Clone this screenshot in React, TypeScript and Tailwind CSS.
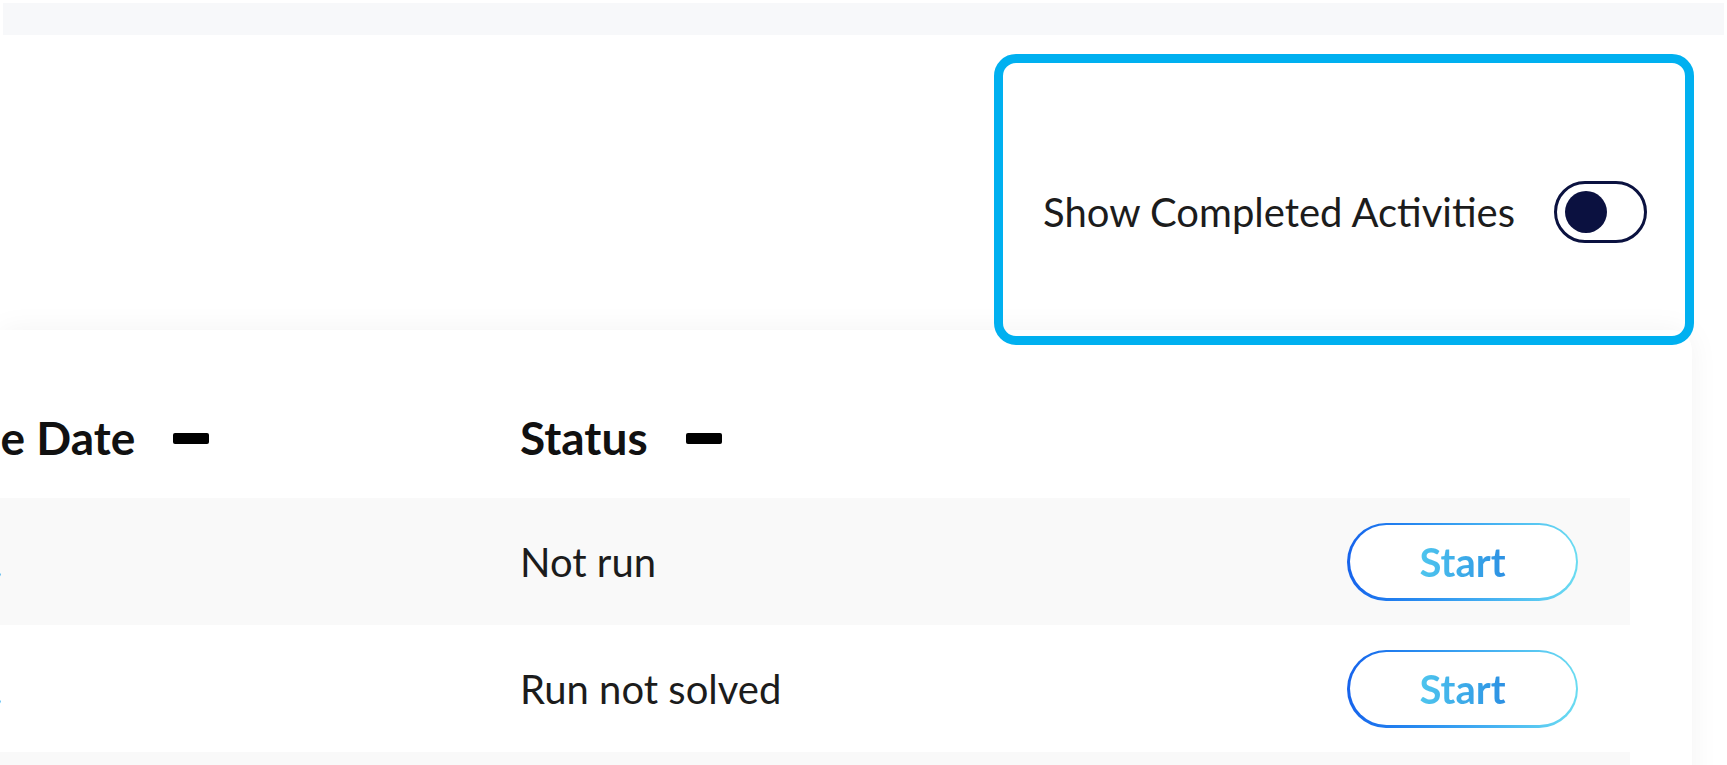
import React from "react";

const FONT = "font-['Lato','Noto_Sans',sans-serif]";

function Minus() {
  return <span className="inline-block w-[36px] h-[11px] bg-black rounded-[2px] ml-[38px]" />;
}

function StartButton() {
  return (
    <div className="w-[231px] h-[78px] rounded-full p-[2.5px] bg-linear-to-r from-[#1763ec] to-[#6bdcf1]">
      <button className="w-full h-full rounded-full bg-white flex items-center justify-center">
        <span className="text-[40px] font-bold leading-none bg-linear-to-r from-[#4fc6ee] to-[#2c90e3] bg-clip-text text-transparent">
          Start
        </span>
      </button>
    </div>
  );
}

function Row({ status, shaded }: { status: string; shaded: boolean }) {
  return (
    <div className={`h-[127px] w-[1630px] flex items-center ${shaded ? "bg-[#f9f9f9]" : "bg-white"}`}>
      <div className="w-[520px] overflow-hidden text-[40px] text-[#1c1c1c] leading-none">
        <span className="inline-block -ml-[7px]">.</span>
      </div>
      <div className="flex-1 text-[40px] text-[#1c1c1c] leading-none">{status}</div>
      <div className="pr-[52px]">
        <StartButton />
      </div>
    </div>
  );
}

export default function App() {
  return (
    <div className={`relative w-[1727px] h-[765px] overflow-hidden bg-white ${FONT}`}>
      <div className="px-[3px] pt-[3px]">
        <div className="h-[32px] bg-[#f7f8fa]" />
      </div>

      <div className="w-[1692px] h-[295px] pt-[146px] pr-[45px] flex justify-end items-start">
        <div className="flex items-center gap-[39px]">
          <span className="text-[40px] text-[#1c1c1c] leading-none">Show Completed Activities</span>
          <div className="w-[93px] h-[62px] rounded-full border-[3px] border-[#0b1240] flex items-center pl-[8px]">
            <div className="w-[42px] h-[42px] rounded-full bg-[#0b1140]" />
          </div>
        </div>
      </div>

      <div className="w-[1692px] bg-white rounded-tr-[20px] shadow-[0_0_30px_rgba(0,0,0,0.05)]">
        <div className="h-[168px] pt-[48px] flex items-center w-[1630px]">
          <div className="w-[520px] overflow-hidden flex items-center">
            <span className="-ml-[60px] text-[46px] font-bold text-[#111] leading-none whitespace-nowrap">Due Date</span>
            <Minus />
          </div>
          <div className="flex items-center">
            <span className="text-[46px] font-bold text-[#111] leading-none">Status</span>
            <Minus />
          </div>
        </div>
        <Row status="Not run" shaded={true} />
        <Row status="Run not solved" shaded={false} />
        <Row status="Not run" shaded={true} />
      </div>

      <div className="absolute left-[994px] top-[54px] w-[700px] h-[291px] border-[9px] border-[#00b0f0] rounded-[22px] pointer-events-none" />
    </div>
  );
}
